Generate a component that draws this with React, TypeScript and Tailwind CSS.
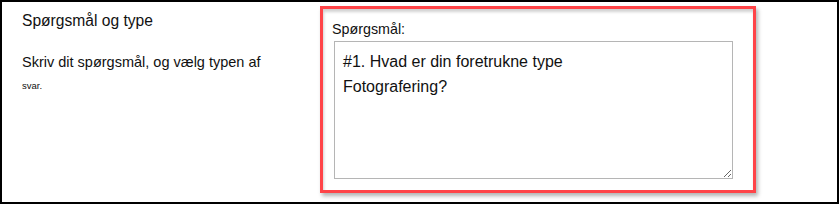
import React from 'react';

const App: React.FC = () => {
  return (
    <div className="w-[839px] h-[204px] border-2 border-black bg-white flex font-['Liberation_Sans',Arial,sans-serif] text-[#111]">
      {/* left: heading + help text */}
      <div className="w-[318px] shrink-0 pl-[20px] pt-[9px]">
        <h2 className="text-[15.6px] leading-[20px] font-normal">Spørgsmål og type</h2>
        <p className="mt-[22px] text-[14.5px] leading-[18px]">Skriv dit spørgsmål, og vælg typen af</p>
        <p className="mt-[9px] text-[9.5px] leading-[12px]">svar.</p>
      </div>

      {/* right: highlighted question field */}
      <div className="mt-[4px] w-[436px] h-[187px] border-[3px] border-[#ff4448] shadow-[2px_3px_4px_rgba(0,0,0,0.3),inset_1px_3px_3px_rgba(0,0,0,0.18)] pt-[12px]">
        <label className="block ml-[9px] text-[14.3px] leading-[16px]">Spørgsmål:</label>
        <textarea
          className="block mt-[4px] ml-[11px] w-[399px] h-[138px] border border-[#b5b5b5] px-[8px] pt-[7px] text-[16px] leading-[25px] text-[#111] outline-none font-['Liberation_Sans',Arial,sans-serif]"
          defaultValue={'#1. Hvad er din foretrukne type\nFotografering?'}
        />
      </div>
    </div>
  );
};

export default App;
